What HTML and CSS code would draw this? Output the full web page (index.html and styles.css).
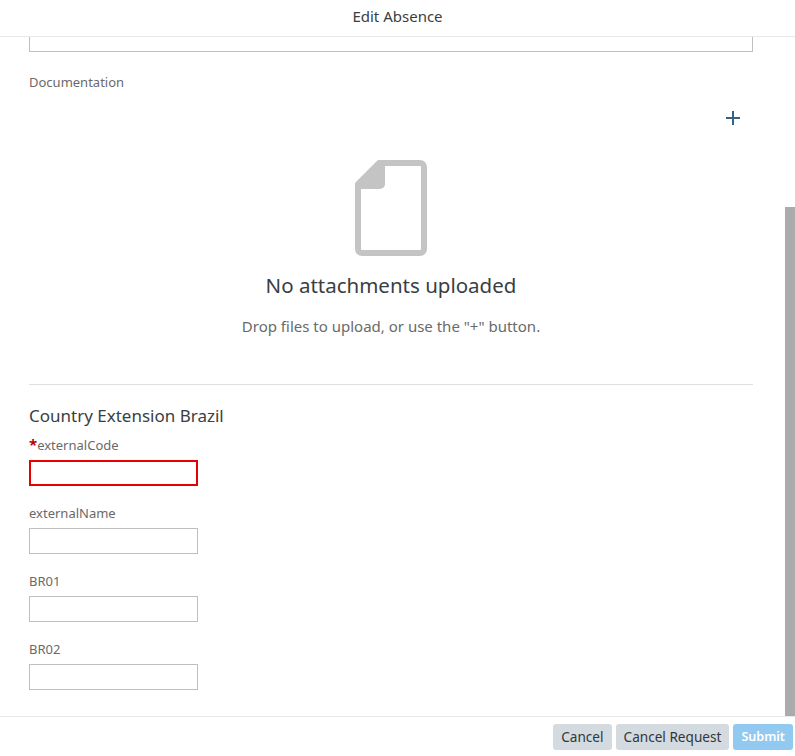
FILE: index.html
```html
<!DOCTYPE html>
<html lang="en">
<head>
    <meta charset="UTF-8">
    <meta name="viewport" content="width=device-width, initial-scale=1.0">
    <title>Edit Absence</title>
    <link rel="stylesheet" href="styles.css">
</head>
<body>
    <div class="dialog">
        <header class="dialog-header">Edit Absence</header>
        <main class="dialog-content">
            <div class="textarea-stub"></div>
            <div class="field-label doc-label">Documentation</div>
            <div class="upload-toolbar">
                <svg class="add-icon" width="16" height="16" viewBox="0 0 16 16">
                    <path d="M7 1h2v6h6v2H9v6H7V9H1V7h6z" fill="#346187"/>
                </svg>
            </div>
            <div class="no-data">
                <svg class="file-icon" width="72" height="96" viewBox="0 0 72 96">
                    <path d="M24 3H65a4 4 0 0 1 4 4V89a4 4 0 0 1-4 4H7a4 4 0 0 1-4-4V24z" fill="none" stroke="#c4c4c4" stroke-width="6" stroke-linejoin="round"/>
                    <path d="M25 0H30V24a5 5 0 0 1-5 5H0V24z" fill="#c4c4c4"/>
                </svg>
                <div class="no-data-title">No attachments uploaded</div>
                <div class="no-data-text">Drop files to upload, or use the "+" button.</div>
            </div>
            <hr class="divider">
            <h2 class="section-title">Country Extension Brazil</h2>
            <div class="field">
                <label class="field-label"><span class="required">*</span>externalCode</label>
                <input class="text-input error" type="text">
            </div>
            <div class="field">
                <label class="field-label">externalName</label>
                <input class="text-input" type="text">
            </div>
            <div class="field">
                <label class="field-label">BR01</label>
                <input class="text-input" type="text">
            </div>
            <div class="field">
                <label class="field-label">BR02</label>
                <input class="text-input" type="text">
            </div>
        </main>
        <div class="scroll-thumb"></div>
        <footer class="dialog-footer">
            <button class="btn">Cancel</button>
            <button class="btn">Cancel Request</button>
            <button class="btn btn-primary">Submit</button>
        </footer>
    </div>
</body>
</html>
```

FILE: styles.css
```css
body {
    font-family: "Noto Sans", Arial, sans-serif;
    background-color: #ffffff;
    color: #3a3e42;
    margin: 0;
    padding: 0;
}

.dialog {
    position: relative;
    display: flex;
    flex-direction: column;
    height: 756px;
    overflow: hidden;
}

.dialog-header {
    height: 36px;
    line-height: 33px;
    border-bottom: 1px solid #e8e8e8;
    text-align: center;
    font-size: 15px;
    flex-shrink: 0;
}

.dialog-content {
    flex: 1;
    padding: 0 42px 0 29px;
    overflow: hidden;
}

.textarea-stub {
    height: 14px;
    border: 1px solid #bfbfbf;
    border-top: none;
}

.field-label {
    display: block;
    font-size: 13px;
    line-height: 18px;
    color: #6a6a6a;
}

.doc-label {
    margin-top: 21px;
}

.upload-toolbar {
    display: flex;
    justify-content: flex-end;
    padding: 19px 12px 0 0;
}

.add-icon {
    display: block;
}

.no-data {
    display: flex;
    flex-direction: column;
    align-items: center;
    margin-top: 34px;
}

.file-icon {
    display: block;
}

.no-data-title {
    margin-top: 15px;
    font-size: 20.5px;
    line-height: 28px;
}

.no-data-text {
    margin-top: 17px;
    font-size: 15px;
    line-height: 20px;
    color: #6a6a6a;
}

.divider {
    margin: 48px 0 0;
    border: none;
    border-top: 1px solid #e0e0e0;
}

.section-title {
    margin: 19px 0 0;
    font-size: 17px;
    line-height: 24px;
    font-weight: 400;
}

.field {
    margin-bottom: 18px;
}

.section-title + .field {
    margin-top: 8px;
}

.field .field-label {
    margin-bottom: 6px;
}

.required {
    color: #bb0000;
    font-weight: 700;
    font-size: 15px;
    line-height: 16px;
}

.text-input {
    display: block;
    box-sizing: border-box;
    width: 169px;
    height: 26px;
    padding: 0 6px;
    border: 1px solid #bfbfbf;
    background-color: #ffffff;
    outline: none;
}

.text-input.error {
    border: 2px solid #e60000;
}

.scroll-thumb {
    position: absolute;
    top: 207px;
    right: 0;
    width: 10px;
    height: 509px;
    background-color: #ababab;
}

.dialog-footer {
    display: flex;
    justify-content: flex-end;
    align-items: flex-start;
    gap: 4px;
    height: 40px;
    padding: 7px 2px 0 0;
    box-sizing: border-box;
    border-top: 1px solid #e8e8e8;
    flex-shrink: 0;
}

.btn {
    height: 26px;
    padding: 0 8px 2px;
    border: none;
    border-radius: 3px;
    background-color: #d3dae0;
    color: #32363a;
    font-family: inherit;
    font-size: 13.6px;
}

.btn-primary {
    background-color: #92c9f0;
    color: #ffffff;
    font-size: 12.6px;
    font-weight: 600;
}
```
